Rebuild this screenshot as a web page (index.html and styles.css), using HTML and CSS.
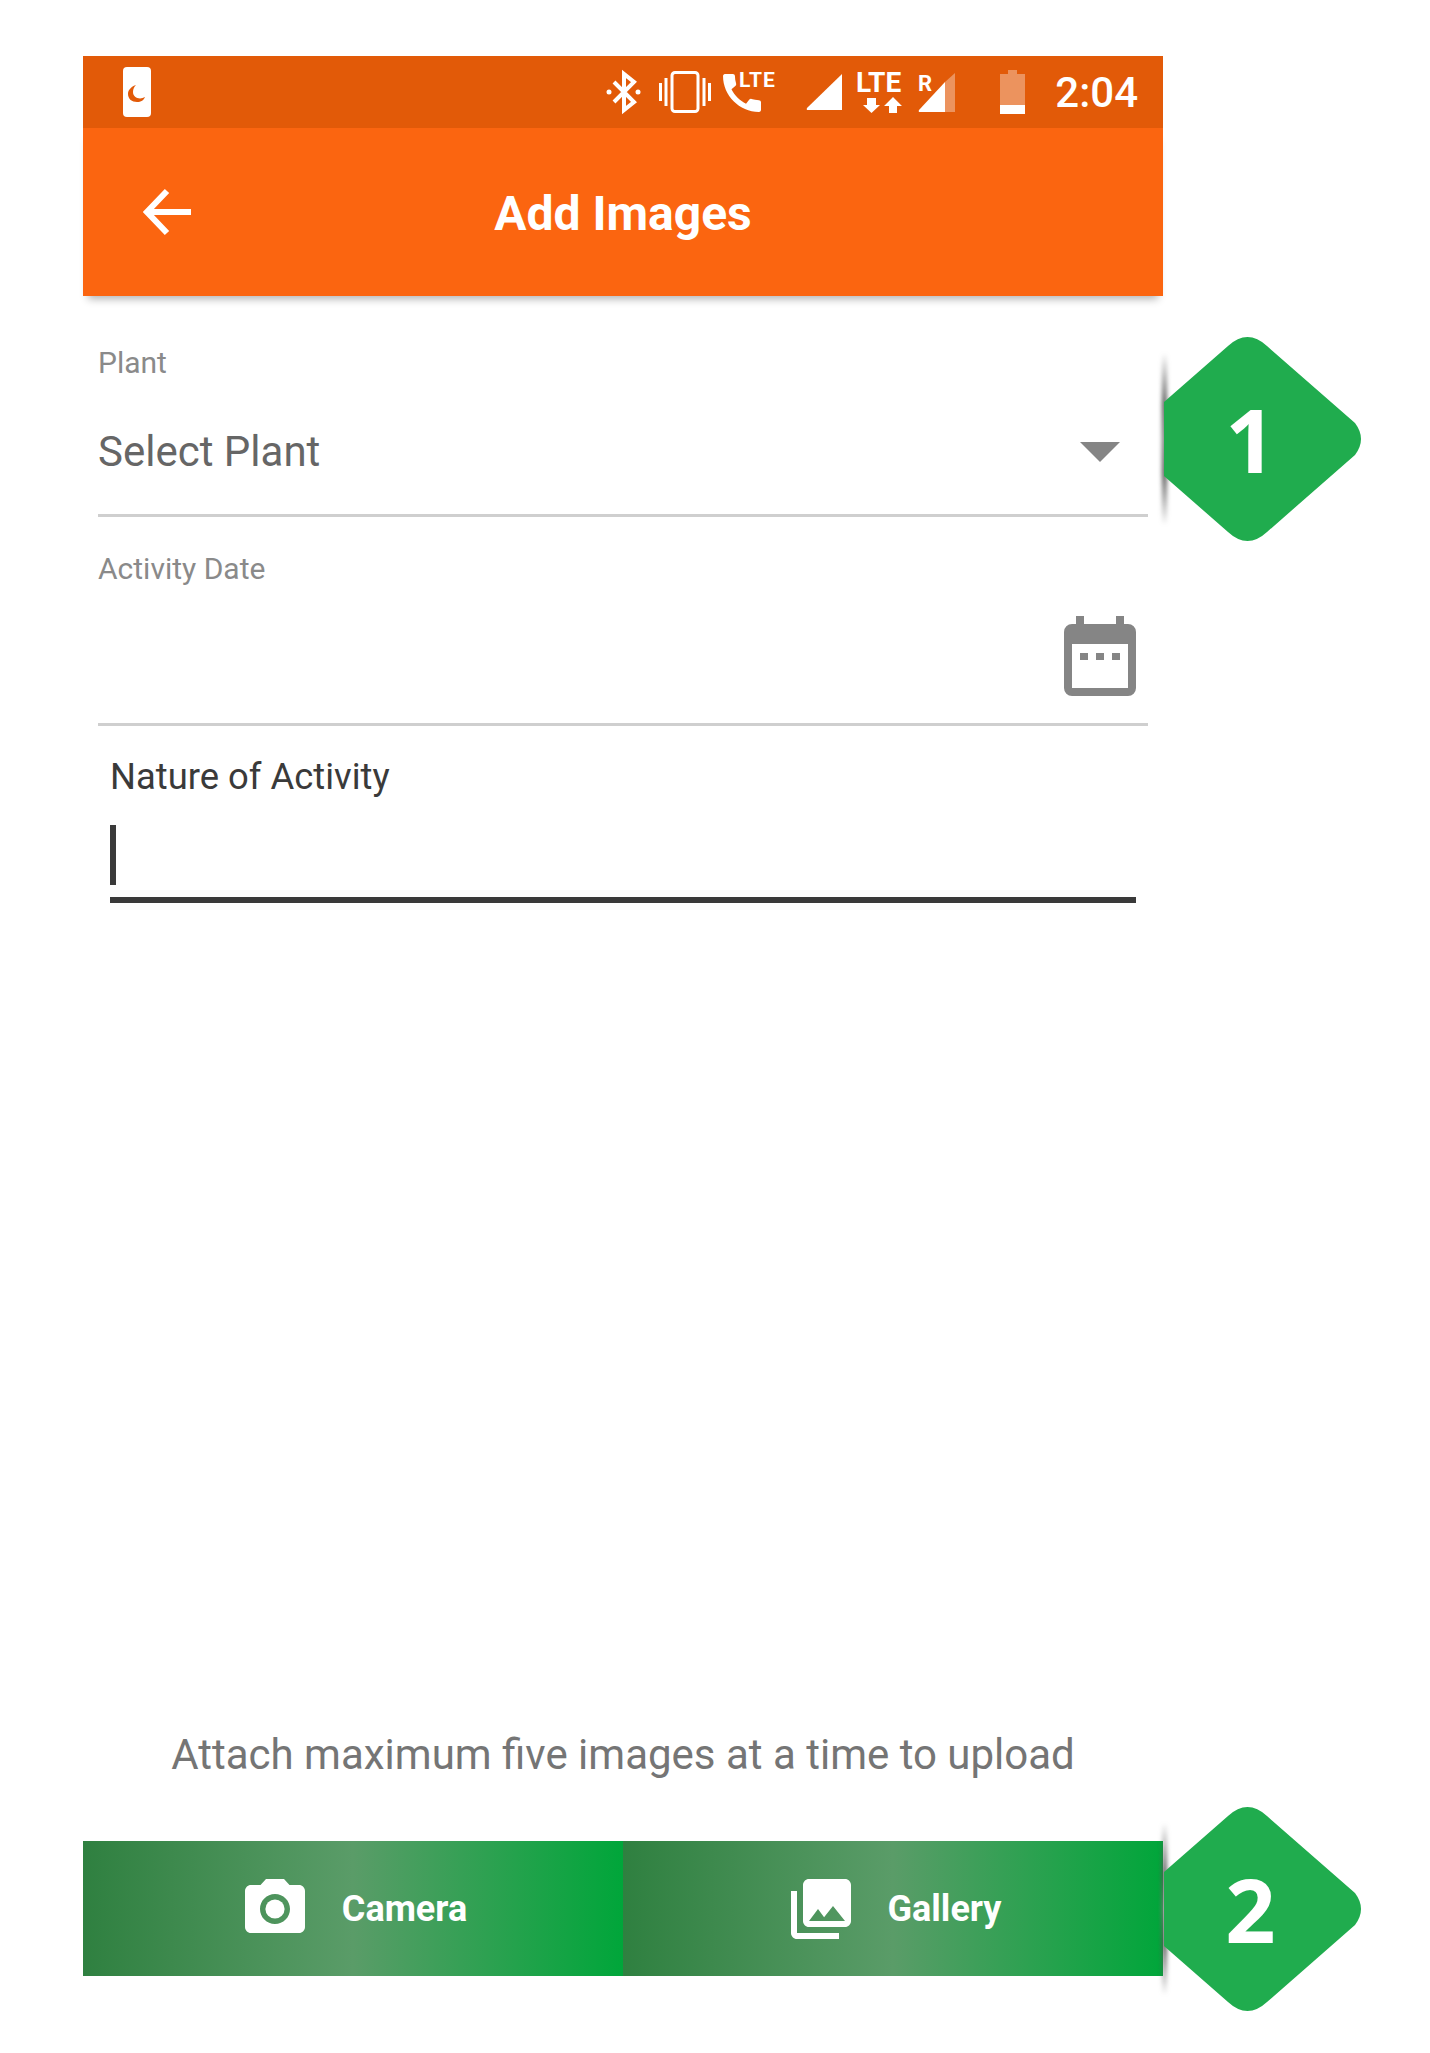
FILE: index.html
```html
<!DOCTYPE html>
<html lang="en">
<head>
<meta charset="utf-8"/>
<title>Add Images</title>
<link rel="stylesheet" href="styles.css">
</head>
<body>
<div class="screen">
  <div class="status-bar">
    <svg class="moon-card" width="28" height="50" viewBox="0 0 28 50">
      <rect width="28" height="50" rx="4" fill="#fff"/>
      <path d="M13 18C7 20 5 24 5 27c0 5 4 8 9 8 4 0 7-2 8-5-5 3-12 1-12-5 0-3 1-5 3-7z" fill="#e25a08"/>
    </svg>
    <div class="status-icons">
      <svg width="35" height="40" viewBox="0 0 35 40" fill="none" stroke="#fff" stroke-width="4">
        <path d="M8 10l20 20-10 8V2l10 8-20 20"/>
        <circle cx="3" cy="20" r="2.5" fill="#fff" stroke="none"/>
        <circle cx="32" cy="20" r="2.5" fill="#fff" stroke="none"/>
      </svg>
      <svg class="gap-18" width="52" height="42" viewBox="0 0 52 42" fill="none" stroke="#fff" stroke-width="3">
        <rect x="13" y="1.5" width="26" height="39" rx="3"/>
        <path d="M1.500 12v18M7 7v28M45 7v28M50.500 12v18"/>
      </svg>
      <svg class="gap-12" width="54" height="40" viewBox="0 0 54 40">
        <g transform="translate(-6.300 -4.300) scale(2.110)">
          <path fill="#fff" d="M20.010 15.380c-1.230 0-2.420-.2-3.530-.56-.35-.12-.74-.03-1.010.24l-1.570 1.970c-2.830-1.350-5.480-3.900-6.890-6.830l1.950-1.660c.27-.28.35-.67.24-1.020-.37-1.110-.56-2.300-.56-3.530 0-.54-.45-.99-.99-.99H4.190C3.650 3 3 3.240 3 3.990 3 13.280 10.730 21 20.010 21c.71 0 .99-.63.99-1.180v-3.450c0-.54-.45-.99-.99-.99z"/>
        </g>
        <text class="mini-text" x="16" y="15">LTE</text>
      </svg>
      <svg class="gap-29" width="36" height="36" viewBox="0 0 36 36">
        <path d="M36 0v36H2q-2 0-1-2z" fill="#fff"/>
      </svg>
      <svg class="gap-14" width="48" height="40" viewBox="0 0 48 40">
        <text class="net-text" x="0" y="20">LTE</text>
        <path d="M11 26h9v7h4l-8.500 8-8.500-8h4zM37 25l9 9h-5v7h-8v-7h-5z" fill="#fff"/>
      </svg>
      <svg class="gap-14" width="37" height="40" viewBox="0 0 37 40">
        <text class="r-text" x="0" y="19">R</text>
        <path d="M27 10v30H2q-2 0-1-2z" fill="#fff"/>
        <path d="M27 10L37 1v39H27z" fill="#fff" fill-opacity=".35"/>
      </svg>
      <svg class="gap-45" width="25" height="44" viewBox="0 0 25 44">
        <path d="M8 0h9v4h8v31H0V4h8z" fill="#fff" fill-opacity=".35"/>
        <rect y="35" width="25" height="9" fill="#fff"/>
      </svg>
      <span class="clock">2:04</span>
    </div>
  </div>

  <header class="app-bar">
    <svg class="back" width="48" height="48" viewBox="0 0 48 48" fill="none" stroke="#fff" stroke-width="6">
      <path d="M48 24H4M24 3L4 24l20 21"/>
    </svg>
    <h1>Add Images</h1>
  </header>

  <div class="form">
    <div class="field">
      <div class="field-label">Plant</div>
      <div class="field-row">
        <span class="field-value">Select Plant</span>
        <svg class="caret" width="40" height="20" viewBox="0 0 40 20"><path d="M0 0h40L20 20z" fill="#858585"/></svg>
      </div>
    </div>
    <div class="field date-field">
      <div class="field-label">Activity Date</div>
      <div class="field-row">
        <span class="field-value">&nbsp;</span>
        <svg class="calendar" width="72" height="80" viewBox="0 0 72 80">
          <path fill="#858585" fill-rule="evenodd" d="M12 0h8v8h32V0h8v8h4a8 8 0 0 1 8 8v56a8 8 0 0 1-8 8H8a8 8 0 0 1-8-8V16a8 8 0 0 1 8-8h4zM8 28v44h56V28z"/>
          <path fill="#858585" d="M16 37h8v7h-8zM32 37h8v7h-8zM48 37h8v7h-8z"/>
        </svg>
      </div>
    </div>
    <div class="text-input">
      <div class="input-label">Nature of Activity</div>
      <div class="input-line"><span class="cursor"></span></div>
    </div>
  </div>

  <p class="hint">Attach maximum five images at a time to upload</p>

  <div class="actions">
    <div class="action">
      <svg class="camera-icon" width="60" height="54" viewBox="2 2 20 18">
        <path fill="#fff" fill-rule="evenodd" d="M9 2L7.170 4H4c-1.100 0-2 .9-2 2v12c0 1.100.9 2 2 2h16c1.100 0 2-.9 2-2V6c0-1.100-.9-2-2-2h-3.170L15 2H9zm3 15c-2.760 0-5-2.240-5-5s2.240-5 5-5 5 2.240 5 5-2.240 5-5 5z"/>
        <circle cx="12" cy="12" r="3.200" fill="#fff"/>
      </svg>
      <span>Camera</span>
    </div>
    <div class="action">
      <svg class="gallery-icon" width="60" height="60" viewBox="2 2 20 20">
        <path fill="#fff" d="M22 16V4c0-1.100-.9-2-2-2H8c-1.100 0-2 .9-2 2v12c0 1.100.9 2 2 2h12c1.100 0 2-.9 2-2zm-11-4l2.030 2.710L16 11l4 5H8l3-4zM2 6v14c0 1.100.9 2 2 2h14v-2H4V6H2z"/>
      </svg>
      <span>Gallery</span>
    </div>
  </div>

  <div class="badge badge-one">
    <svg width="197" height="204" viewBox="0 0 197 204"><path d="M0 65L64 9Q83.500 -9 103 9L191 86Q203 102 191 118L103 195Q83.500 213 64 195L0 139Z" fill="#20ac4e"/></svg>
    <span>1</span>
  </div>
  <div class="badge badge-two">
    <svg width="197" height="204" viewBox="0 0 197 204"><path d="M0 65L64 9Q83.500 -9 103 9L191 86Q203 102 191 118L103 195Q83.500 213 64 195L0 139Z" fill="#20ac4e"/></svg>
    <span>2</span>
  </div>
</div>
</body>
</html>
```

FILE: styles.css
```css
body {
  margin: 0;
  padding: 56px 0 77px 83px;
  background-color: #fff;
  font-family: Roboto, sans-serif;
}
.screen {
  position: relative;
  display: flex;
  flex-direction: column;
  width: 1080px;
  height: 1920px;
}
.status-bar {
  display: flex;
  align-items: center;
  justify-content: space-between;
  flex: none;
  height: 72px;
  padding: 0 25px 0 40px;
  background-color: #e25a08;
}
.status-icons {
  display: flex;
  align-items: center;
}
.status-icons svg {
  overflow: visible;
}
.gap-12 { margin-left: 12px; }
.gap-14 { margin-left: 14px; }
.gap-18 { margin-left: 18px; }
.gap-29 { margin-left: 29px; }
.gap-45 { margin-left: 45px; }
.mini-text {
  font-family: Roboto, sans-serif;
  font-size: 21px;
  font-weight: 700;
  letter-spacing: 1px;
  fill: #fff;
}
.r-text {
  font-family: Roboto, sans-serif;
  font-size: 22px;
  font-weight: 700;
  fill: #fff;
}
.net-text {
  font-family: Roboto, sans-serif;
  font-size: 28px;
  font-weight: 700;
  fill: #fff;
}
.clock {
  margin-left: 30px;
  padding-top: 1px;
  color: #fff;
  font-size: 42px;
  font-weight: 500;
}
.app-bar {
  position: relative;
  display: grid;
  grid-template-columns: 1fr auto 1fr;
  align-items: center;
  flex: none;
  height: 168px;
  background-color: #fb6510;
  box-shadow: 0 8px 8px -5px rgba(0, 0, 0, 0.3);
}
.back {
  margin-left: 60px;
}
.app-bar h1 {
  margin: 0;
  padding-top: 2px;
  color: #fff;
  font-size: 48px;
  font-weight: 700;
}
.form {
  padding: 0 15px;
}
.field {
  padding-top: 51px;
  border-bottom: 3px solid #cfcfcf;
}
.date-field {
  padding-top: 36px;
}
.field-label {
  color: #8a8a8a;
  font-size: 30px;
  line-height: 32px;
}
.field-row {
  display: flex;
  align-items: center;
  justify-content: space-between;
  height: 135px;
  padding-top: 10px;
  box-sizing: border-box;
}
.date-field .field-row {
  height: 138px;
  padding-top: 3px;
}
.field-value {
  color: #666;
  font-size: 42px;
  line-height: 48px;
}
.caret {
  margin-right: 28px;
}
.calendar {
  margin-right: 12px;
}
.text-input {
  padding: 0 12px;
}
.input-label {
  margin-top: 29px;
  color: #3a3a3a;
  font-size: 36.4px;
  line-height: 44px;
}
.input-line {
  display: flex;
  height: 72px;
  margin-top: 26px;
  border-bottom: 6px solid #3a3a3a;
}
.cursor {
  width: 6px;
  height: 60px;
  background-color: #3a3a3a;
}
.hint {
  margin: auto 0 61px;
  color: #757575;
  font-size: 42px;
  line-height: 50px;
  text-align: center;
}
.actions {
  display: flex;
  flex: none;
  height: 135px;
}
.action {
  display: flex;
  align-items: center;
  justify-content: center;
  gap: 37px;
  flex: 1;
  padding-left: 6px;
  color: #fff;
  font-size: 36px;
  font-weight: 700;
  background: linear-gradient(90deg, #2f8040 0%, #5a9c68 50%, #00a63a 100%);
}
.camera-icon {
  margin-top: -5px;
}
.badge {
  position: absolute;
  left: 1081px;
  display: flex;
  align-items: center;
  justify-content: center;
  width: 197px;
  height: 204px;
  color: #fff;
  font-family: "Open Sans", sans-serif;
  font-size: 88px;
  font-weight: 700;
}
.badge::before {
  content: "";
  position: absolute;
  left: -2px;
  top: 16px;
  width: 5px;
  height: 172px;
  background: linear-gradient(180deg, transparent 0%, #555 30%, #777 50%, #555 70%, transparent 100%);
  filter: blur(2px);
}
.badge svg {
  position: absolute;
  left: 0;
  top: 0;
}
.badge span {
  position: relative;
  padding: 0 24px 0 0;
  line-height: 1;
}
.badge-one { top: 281px; }
.badge-two { top: 1751px; }
```
